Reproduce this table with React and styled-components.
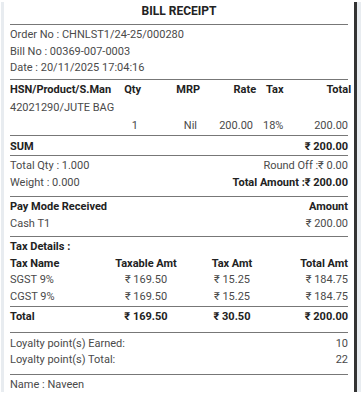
import React from "react";
import styled, { createGlobalStyle } from "styled-components";

const GlobalStyle = createGlobalStyle`
  html, body {
    margin: 0;
    padding: 0;
    background: #ffffff;
  }
  body {
    font-family: Roboto, "Liberation Sans", Arial, sans-serif;
  }
`;

const items = [
  { name: "42021290/JUTE BAG", qty: "1", mrp: "Nil", rate: "200.00", tax: "18%", total: "200.00" },
];

const taxes = [
  { name: "SGST 9%", taxable: "₹ 169.50", tax: "₹ 15.25", total: "₹ 184.75" },
  { name: "CGST 9%", taxable: "₹ 169.50", tax: "₹ 15.25", total: "₹ 184.75" },
];

function App() {
  return (
    <>
      <GlobalStyle />
      <Page>
        <LeftStrip />
        <Receipt>
          <TitleSection>
            <Title>BILL RECEIPT</Title>
          </TitleSection>

          <Section $pt={2} $pb={2}>
            <Line>Order No : CHNLST1/24-25/000280</Line>
            <Line>Bill No : 00369-007-0003</Line>
            <Line>Date : 20/11/2025 17:04:16</Line>
          </Section>

          <Section $pt={1} $pb={0}>
            <ItemGrid $bold>
              <Cell>HSN/Product/S.Man</Cell>
              <Cell $align="right">Qty</Cell>
              <Cell $align="right">MRP</Cell>
              <Cell $align="right">Rate</Cell>
              <Cell $pad>Tax</Cell>
              <Cell $align="right">Total</Cell>
            </ItemGrid>
            {items.map((it) => (
              <React.Fragment key={it.name}>
                <ItemName>{it.name}</ItemName>
                <ItemGrid>
                  <Cell />
                  <Cell $align="right">{it.qty}</Cell>
                  <Cell $align="right">{it.mrp}</Cell>
                  <Cell $align="right">{it.rate}</Cell>
                  <Cell $pad>{it.tax}</Cell>
                  <Cell $align="right">{it.total}</Cell>
                </ItemGrid>
              </React.Fragment>
            ))}
          </Section>

          <Section $pt={3} $pb={0}>
            <Row $bold>
              <span>SUM</span>
              <span>₹ 200.00</span>
            </Row>
          </Section>

          <Section $pt={2} $pb={5}>
            <Row>
              <span>Total Qty : 1.000</span>
              <span>Round Off :₹ 0.00</span>
            </Row>
            <Row>
              <span>Weight : 0.000</span>
              <Strong>Total Amount :₹ 200.00</Strong>
            </Row>
          </Section>

          <Section $pt={2} $pb={4}>
            <Row $bold>
              <span>Pay Mode Received</span>
              <span>Amount</span>
            </Row>
            <Row>
              <span>Cash T1</span>
              <span>₹ 200.00</span>
            </Row>
          </Section>

          <Section $pt={2} $pb={1}>
            <Row $bold>
              <span>Tax Details :</span>
            </Row>
            <TaxGrid $bold>
              <Cell>Tax Name</Cell>
              <Cell $align="center">Taxable Amt</Cell>
              <Cell $align="center">Tax Amt</Cell>
              <Cell $align="right">Total Amt</Cell>
            </TaxGrid>
            {taxes.map((t) => (
              <TaxGrid key={t.name}>
                <Cell>{t.name}</Cell>
                <Cell $align="center">{t.taxable}</Cell>
                <Cell $align="center">{t.tax}</Cell>
                <Cell $align="right">{t.total}</Cell>
              </TaxGrid>
            ))}
          </Section>

          <Section $pt={2} $pb={6}>
            <TaxGrid $bold>
              <Cell>Total</Cell>
              <Cell $align="center">₹ 169.50</Cell>
              <Cell $align="center">₹ 30.50</Cell>
              <Cell $align="right">₹ 200.00</Cell>
            </TaxGrid>
          </Section>

          <Section $pt={3} $pb={5}>
            <Row>
              <span>Loyalty point(s) Earned:</span>
              <span>10</span>
            </Row>
            <Row>
              <span>Loyalty point(s) Total:</span>
              <span>22</span>
            </Row>
          </Section>

          <Section $pt={2} $pb={0} $last>
            <Line>Name : Naveen</Line>
          </Section>
        </Receipt>
        <RightEdge />
        <RightStrip />
      </Page>
    </>
  );
}

const Page = styled.div`
  display: flex;
  margin: 2px 3px 0 0;
  padding-left: 1px;
  height: 390px;
`;

const LeftStrip = styled.div`
  width: 3px;
  background: #e8ecf0;
`;

const Receipt = styled.div`
  flex: 1;
  padding: 0 6px;
  font-size: 11px;
  color: #4a4a4a;
  overflow: hidden;
`;

const RightEdge = styled.div`
  width: 3px;
  background: #333333;
`;

const RightStrip = styled.div`
  width: 4px;
  background: #e8ecf0;
`;

const TitleSection = styled.div`
  padding: 1px 0 5px;
  border-bottom: 1px solid #777777;
  text-align: center;
`;

const Title = styled.div`
  font-size: 12px;
  font-weight: 700;
  line-height: 16px;
  color: #222222;
`;

const Section = styled.div`
  padding-top: ${(p) => p.$pt}px;
  padding-bottom: ${(p) => p.$pb}px;
  border-bottom: ${(p) => (p.$last ? "none" : "1px solid #777777")};
`;

const Line = styled.div`
  line-height: 16.5px;
  white-space: nowrap;
`;

const Row = styled.div`
  display: flex;
  justify-content: space-between;
  line-height: 16.5px;
  white-space: nowrap;
  font-weight: ${(p) => (p.$bold ? 700 : 400)};
  color: ${(p) => (p.$bold ? "#222222" : "inherit")};
`;

const Strong = styled.span`
  font-weight: 700;
  color: #222222;
`;

const ItemGrid = styled.div`
  display: grid;
  grid-template-columns: 1fr 30px 59px 56px 37px 58px;
  line-height: 18px;
  white-space: nowrap;
  font-weight: ${(p) => (p.$bold ? 700 : 400)};
  color: ${(p) => (p.$bold ? "#222222" : "inherit")};
`;

const ItemName = styled.div`
  line-height: 18px;
  white-space: nowrap;
`;

const TaxGrid = styled.div`
  display: grid;
  grid-template-columns: 93px 86px 86px 1fr;
  line-height: 16.5px;
  white-space: nowrap;
  font-weight: ${(p) => (p.$bold ? 700 : 400)};
  color: ${(p) => (p.$bold ? "#222222" : "inherit")};
`;

const Cell = styled.div`
  text-align: ${(p) => p.$align || "left"};
  padding-left: ${(p) => (p.$pad ? "10px" : "0")};
`;

export default App;
